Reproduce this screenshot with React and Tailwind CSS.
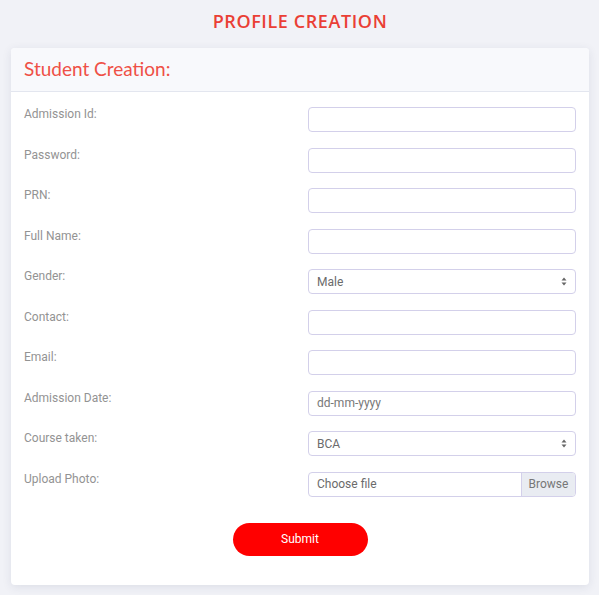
import React from 'react';

const fields = [
  { label: 'Admission Id:', type: 'text' },
  { label: 'Password:', type: 'text' },
  { label: 'PRN:', type: 'text' },
  { label: 'Full Name:', type: 'text' },
  { label: 'Gender:', type: 'select', value: 'Male' },
  { label: 'Contact:', type: 'text' },
  { label: 'Email:', type: 'text' },
  { label: 'Admission Date:', type: 'date' },
  { label: 'Course taken:', type: 'select', value: 'BCA' },
  { label: 'Upload Photo:', type: 'file' },
];

const SelectArrows = () => (
  <svg className="w-[6px] h-[9px]" viewBox="0 0 6 9" fill="#666">
    <path d="M3 0.5L5.5 3.5H0.5z" />
    <path d="M3 8.5L0.5 5.5H5.5z" />
  </svg>
);

const Field = ({ field }) => {
  const box = 'h-[25px] w-full rounded-[4px] border border-[#d3d0ea] bg-white';
  if (field.type === 'select') {
    return (
      <div className={`${box} flex items-center justify-between pl-[8px] pr-[8px] text-[12px] text-[#6b6b6b]`}>
        <span>{field.value}</span>
        <SelectArrows />
      </div>
    );
  }
  if (field.type === 'date') {
    return (
      <div className={`${box} flex items-center pl-[8px] text-[12px] text-[#777]`}>dd-mm-yyyy</div>
    );
  }
  if (field.type === 'file') {
    return (
      <div className={`${box} flex items-stretch overflow-hidden text-[12px] text-[#6b6b6b]`}>
        <div className="flex-1 flex items-center pl-[8px]">Choose file</div>
        <div className="w-[54px] flex items-center justify-center bg-[#e9ecf2] border-l border-[#d3d0ea] text-[#777]">Browse</div>
      </div>
    );
  }
  return <div className={box} />;
};

const App = () => {
  return (
    <div className="w-[599px] h-[595px] bg-[#f1f2f7] pl-[11px] pr-[10px] overflow-hidden" style={{ fontFamily: 'Roboto, sans-serif' }}>
      <h1
        className="text-center text-[18px] font-semibold text-[#ea3f35] pt-[8px] h-[48px] tracking-[0.6px]"
        style={{ fontFamily: '"Open Sans", sans-serif' }}
      >
        PROFILE CREATION
      </h1>

      <div className="bg-white rounded-[4px] shadow-[0_2px_10px_rgba(40,50,90,0.10)] h-[537px]">
        {/* Header */}
        <div className="h-[44px] bg-[#f8f9fc] border-b border-[#e3e6ef] rounded-t-[4px] flex items-center px-[13px]">
          <h3 className="text-[19px] text-[#ef5046]" style={{ fontFamily: 'Lato, sans-serif' }}>
            Student Creation:
          </h3>
        </div>

        {/* Body */}
        <div className="px-[13px] pt-[15px]">
          <div className="flex flex-col gap-[15.5px]">
            {fields.map((f) => (
              <div key={f.label} className="flex items-start">
                <label className="w-[284px] shrink-0 text-[12px] text-[#939393] leading-[14px]">
                  {f.label}
                </label>
                <Field field={f} />
              </div>
            ))}
          </div>

          <div className="flex justify-center pt-[26px]">
            <button className="w-[135px] h-[33px] rounded-full bg-[#ff0000] text-white text-[12px]">
              Submit
            </button>
          </div>
        </div>
      </div>
    </div>
  );
};

export default App;
